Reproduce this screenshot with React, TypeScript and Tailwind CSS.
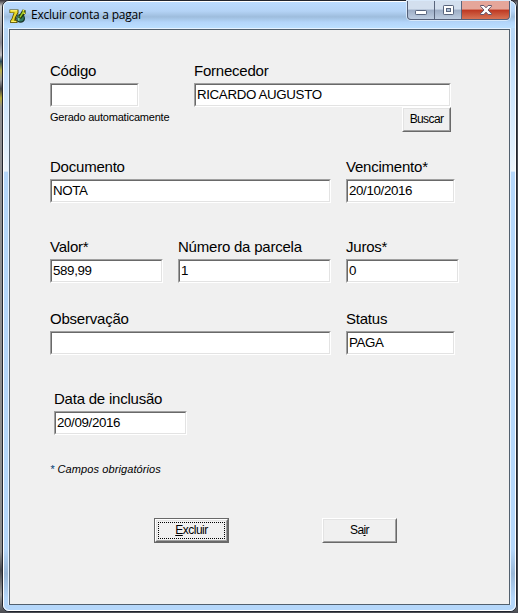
import type { ReactNode } from 'react';

function Field({ label, value = '', width }: { label: string; value?: string; width: string }) {
  return (
    <div className={`flex h-[46px] flex-col ${width}`}>
      <span className="h-[22px] whitespace-nowrap pt-px text-[15px] leading-[18px] tracking-[-0.22px]">{label}</span>
      <div className="h-6 border border-t-[#a0a0a0] border-l-[#a0a0a0] border-r-white border-b-white">
        <div className="h-full border border-t-[#696969] border-l-[#696969] border-r-[#e3e3e3] border-b-[#e3e3e3] bg-white pl-px pt-px text-[13.33px] leading-[18px] tracking-[-0.36px] whitespace-nowrap">
          {value}
        </div>
      </div>
    </div>
  );
}

function Button({ children, width }: { children: ReactNode; width: string }) {
  return (
    <button className={`h-[25px] border border-t-white border-l-white border-r-[#696969] border-b-[#696969] bg-[#f0f0f0] ${width}`}>
      <span className="flex h-full items-center justify-center border border-t-[#e3e3e3] border-l-[#e3e3e3] border-r-[#a0a0a0] border-b-[#a0a0a0] pb-px text-[12px] leading-[14px] tracking-[-0.6px]">
        <span>{children}</span>
      </span>
    </button>
  );
}

function AppIcon() {
  return (
    <svg className="mt-px h-4 w-[18px] shrink-0" viewBox="0 0 18 16">
      <path d="M.5 1.5h9V5L7 9.5V12h1.5v3H1.2v-2.6L2.5 11 4.6 5H.5z" fill="#4d4700" />
      <path d="M1.2 2h7.4v2.6L5.8 9.5l-.6 3.2h2.4v1.6H2v-1.6l1.2-1.4L5.6 4.6H1.2z" fill="#e8d82c" />
      <path d="M1.5 2.2h6.5v1h-6.5zM2.4 13h4.6v.8H2.4z" fill="#fff27c" />
      <circle cx="11.6" cy="10.4" r="4.4" fill="#173527" />
      <circle cx="11.4" cy="10.1" r="3.4" fill="#347c64" />
      <path d="M8.8 8.8l2.6-1 1 2-2 1v2H8.8z" fill="#8dc89b" />
      <path d="M9 9.6 13.6 1.6l3 .6v3L12 11z" fill="#243b0c" />
      <path d="M10.2 9.2 14 3l1.2 1-3.6 5.6z" fill="#a3d329" />
      <path d="M13.6 1.8h1.8v1.8h-1.8zM14.4 4.4h1.8v1.6h-1.8z" fill="#f3e83a" />
    </svg>
  );
}

function WindowControls() {
  return (
    <div className="flex h-[19px] w-[103px] overflow-hidden rounded-b-[4px] border border-t-0 border-[#535f78] bg-[#535f78] shadow-[0_0_0_1px_#d9e9fa]">
      <div className="flex w-[27px] items-center justify-center border-r border-[#59657c] bg-linear-to-b from-[#d3dfee] from-45% via-[#9dadc5] via-50% to-[#bdcce0]">
        <svg width="14" height="16" viewBox="0 0 14 16"><rect x="1.5" y="8.5" width="11" height="4" rx=".7" fill="white" stroke="#58647c" /></svg>
      </div>
      <div className="flex w-[27px] items-center justify-center border-r border-[#59657c] bg-linear-to-b from-[#d3dfee] from-45% via-[#9dadc5] via-50% to-[#bdcce0]">
        <svg width="13" height="12" viewBox="0 0 13 12"><rect x="1.5" y="1.5" width="10" height="9" rx=".7" fill="white" stroke="#58647c" /><rect x="4.5" y="4.5" width="4" height="3" fill="#afc1d8" stroke="#58647c" /></svg>
      </div>
      <div className="flex flex-1 items-center justify-center bg-linear-to-b from-[#e5a69a] from-45% via-[#bd3620] via-50% to-[#d77355]">
        <svg width="14" height="12" viewBox="0 0 14 12">
          <path d="M1.5 1.5h3.4L7 3.8l2.1-2.3h3.4v.8L9 6l3.5 3.7v.8H9.1L7 8.2l-2.1 2.3H1.5v-.8L5 6 1.5 2.3z" fill="white" stroke="#62556a" />
        </svg>
      </div>
    </div>
  );
}

export default function App() {
  return (
    <div className="flex h-[613px] w-[518px] border-r border-[#484b52] bg-[linear-gradient(180deg,#36323c_0,#c8c8c8_1%,#888891_7%,#bfbfc2_9%,#2b4a5a_10%,#b9b04a_11.5%,#9b9b9b_13%,#444448_14.5%,#b5aa38_16%,#8f8f92_17.5%,#8c8c8c_90%,#484a50_93%,#9a9a9a_97%,#484a50_100%)] pl-[2px] font-['Liberation_Sans',Arial,sans-serif] text-black">
      <div className="flex h-[612px] w-[515px] flex-col rounded-[7px] border border-[#20242d] bg-[#b5d7fa]">
        <div className="flex h-[610px] flex-col rounded-[6px] border border-white bg-[linear-gradient(180deg,#bdd9f7_0,#b5d5f5_7%,#c7e2fc_12%,#e0effc_24%,#edf4fa_27.8%,#b5d7fa_28%,#b5d7fa_90%,#9ab8d8_94%,#b5d7fa_98%)] px-1">
          <header className="-mx-1 flex h-[26px] shrink-0 items-start rounded-t-[5px] bg-[linear-gradient(180deg,#badbff_0%,#b4d3f6_35%,#9ebddd_57%,#b3d5fa_78%,#bbdfff_100%)] pl-[5px]">
            <div className="flex h-full items-center">
              <AppIcon />
              <span className="ml-[4px] w-[130px] whitespace-nowrap font-['Open_Sans','Noto_Sans',sans-serif] text-[12px] leading-4 tracking-[-0.23px]">Excluir conta a pagar</span>
            </div>
            <div className="-mt-px ml-auto mr-[5px]"><WindowControls /></div>
          </header>
          <main className="h-[577px] shrink-0 border border-[#e6f2ff]">
            <div className="h-[576px] w-[501px] border border-[#52606e] bg-[#f0f0f0]">
              <form className="flex flex-col pl-10 pt-[31px]" onSubmit={(event) => event.preventDefault()}>
                <div className="flex gap-[55px]">
                  <Field label="Código" width="w-[89px]" />
                  <Field label="Fornecedor" value="RICARDO AUGUSTO" width="w-[257px]" />
                </div>
                <div className="flex h-[50px] w-[401px] justify-between">
                  <span className="mt-[3px] whitespace-nowrap text-[11px] leading-[14px] tracking-[-0.22px]">Gerado automaticamente</span>
                  <Button width="w-[49px]">Buscar</Button>
                </div>
                <div className="flex gap-[15px]">
                  <Field label="Documento" value="NOTA" width="w-[281px]" />
                  <Field label="Vencimento*" value="20/10/2016" width="w-[109px]" />
                </div>
                <div className="mt-[34px] flex gap-[15px]">
                  <Field label="Valor*" value="589,99" width="w-[113px]" />
                  <Field label="Número da parcela" value="1" width="w-[153px]" />
                  <Field label="Juros*" value="0" width="w-[113px]" />
                </div>
                <div className="mt-[26px] flex gap-[15px]">
                  <Field label="Observação" width="w-[281px]" />
                  <Field label="Status" value="PAGA" width="w-[109px]" />
                </div>
                <div className="ml-1 mt-[34px]">
                  <Field label="Data de inclusão" value="20/09/2016" width="w-[133px]" />
                </div>
                <p className="mt-[26px] h-4 text-[11px] leading-4 tracking-[0.1px] italic"><span className="text-[#003c74]">*</span> Campos obrigatórios</p>
                <div className="ml-[104px] mt-[41px] flex gap-[93px]">
                  <button className="h-[25px] w-[75px] border border-[#696969]">
                    <span className="block h-full border border-t-white border-l-white border-r-[#696969] border-b-[#696969]">
                      <span className="block h-full border border-t-[#e3e3e3] border-l-[#e3e3e3] border-r-[#a0a0a0] border-b-[#a0a0a0] p-px">
                        <span className="flex h-full items-center justify-center border border-dotted border-black pb-px text-[12px] leading-[14px] tracking-[-0.5px]"><span><u>E</u>xcluir</span></span>
                      </span>
                    </span>
                  </button>
                  <Button width="w-[75px]"><span>Sa<u>i</u>r</span></Button>
                </div>
              </form>
            </div>
          </main>
        </div>
      </div>
    </div>
  );
}
